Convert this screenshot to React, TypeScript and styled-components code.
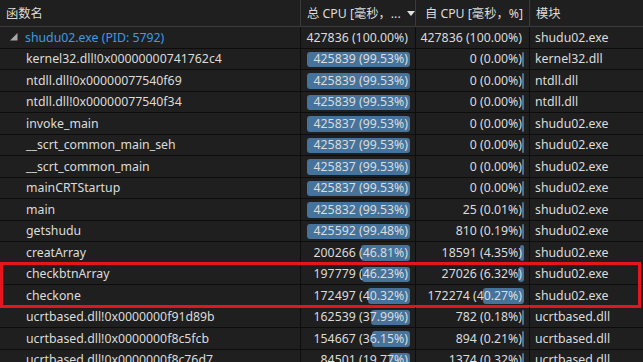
import styled, { createGlobalStyle } from 'styled-components';

const GlobalStyle = createGlobalStyle`
  html, body {
    margin: 0;
    padding: 0;
    background: #1f1f1f;
  }
  body {
    font-family: "Noto Sans", "Noto Sans CJK SC", sans-serif;
    font-size: 12.3px;
    color: #dcdcdc;
    overflow: hidden;
  }
`;

const Grid = styled.div`
  width: 643px;
  height: 362px;
  overflow: hidden;
  background: #1f1f1f;
`;

const HeaderRow = styled.div`
  display: grid;
  grid-template-columns: 301px 115px 114px 1fr;
  height: 27px;
  border-bottom: 1px solid #3b3b3b;
  box-sizing: border-box;
`;

const HeaderCell = styled.div<{ align?: 'left' | 'right' }>`
  display: flex;
  align-items: center;
  justify-content: ${p => (p.align === 'right' ? 'flex-end' : 'flex-start')};
  gap: 6px;
  padding: 0 6px 0 6px;
  border-right: 1px solid #3b3b3b;
  white-space: nowrap;
  overflow: hidden;

  &:last-child {
    border-right: none;
  }
`;

const SortArrow = styled.span`
  margin-left: auto;
  display: flex;
  align-items: center;
`;

const Row = styled.div`
  display: grid;
  grid-template-columns: 301px 115px 114px 1fr;
  height: 21.5px;
  border-bottom: 1px solid #0d0d0d;
  box-sizing: border-box;
`;

const NameCell = styled.div<{ root?: boolean }>`
  display: flex;
  align-items: center;
  gap: 7px;
  padding-left: ${p => (p.root ? '10px' : '26px')};
  border-right: 1px solid #0d0d0d;
  color: ${p => (p.root ? '#3d9be0' : '#dcdcdc')};
  white-space: nowrap;
  overflow: hidden;
`;

const NumCell = styled.div`
  position: relative;
  display: flex;
  align-items: center;
  justify-content: flex-end;
  padding-right: 7px;
  border-right: 1px solid #0d0d0d;
  white-space: nowrap;
`;

const BarTrack = styled.div`
  position: absolute;
  top: 3px;
  bottom: 2px;
  left: 5px;
  right: 5px;
  display: flex;
  justify-content: flex-end;
`;

const Bar = styled.div`
  height: 100%;
  background: #46739b;
  border-radius: 3px;
`;

const NumText = styled.span`
  position: relative;
`;

const ModuleCell = styled.div`
  display: flex;
  align-items: center;
  padding-left: 5px;
  white-space: nowrap;
  overflow: hidden;
`;

const Highlight = styled.div`
  position: relative;

  &::after {
    content: '';
    position: absolute;
    top: -2px;
    bottom: -1px;
    left: 0;
    right: 2px;
    border: 3px solid #e3151d;
    pointer-events: none;
  }
`;

interface Entry {
  name: string;
  total: number;
  totalPct: string;
  self: number;
  selfPct: string;
  module: string;
  root?: boolean;
}

const rows: Entry[] = [
  { name: 'shudu02.exe (PID: 5792)', total: 427836, totalPct: '100.00', self: 427836, selfPct: '100.00', module: 'shudu02.exe', root: true },
  { name: 'kernel32.dll!0x00000000741762c4', total: 425839, totalPct: '99.53', self: 0, selfPct: '0.00', module: 'kernel32.dll' },
  { name: 'ntdll.dll!0x00000077540f69', total: 425839, totalPct: '99.53', self: 0, selfPct: '0.00', module: 'ntdll.dll' },
  { name: 'ntdll.dll!0x00000077540f34', total: 425839, totalPct: '99.53', self: 0, selfPct: '0.00', module: 'ntdll.dll' },
  { name: 'invoke_main', total: 425837, totalPct: '99.53', self: 0, selfPct: '0.00', module: 'shudu02.exe' },
  { name: '__scrt_common_main_seh', total: 425837, totalPct: '99.53', self: 0, selfPct: '0.00', module: 'shudu02.exe' },
  { name: '__scrt_common_main', total: 425837, totalPct: '99.53', self: 0, selfPct: '0.00', module: 'shudu02.exe' },
  { name: 'mainCRTStartup', total: 425837, totalPct: '99.53', self: 0, selfPct: '0.00', module: 'shudu02.exe' },
  { name: 'main', total: 425832, totalPct: '99.53', self: 25, selfPct: '0.01', module: 'shudu02.exe' },
  { name: 'getshudu', total: 425592, totalPct: '99.48', self: 810, selfPct: '0.19', module: 'shudu02.exe' },
  { name: 'creatArray', total: 200266, totalPct: '46.81', self: 18591, selfPct: '4.35', module: 'shudu02.exe' },
  { name: 'checkbtnArray', total: 197779, totalPct: '46.23', self: 27026, selfPct: '6.32', module: 'shudu02.exe' },
  { name: 'checkone', total: 172497, totalPct: '40.32', self: 172274, selfPct: '40.27', module: 'shudu02.exe' },
  { name: 'ucrtbased.dll!0x0000000f91d89b', total: 162539, totalPct: '37.99', self: 782, selfPct: '0.18', module: 'ucrtbased.dll' },
  { name: 'ucrtbased.dll!0x0000000f8c5fcb', total: 154667, totalPct: '36.15', self: 894, selfPct: '0.21', module: 'ucrtbased.dll' },
  { name: 'ucrtbased.dll!0x0000000f8c76d7', total: 84501, totalPct: '19.77', self: 1374, selfPct: '0.32', module: 'ucrtbased.dll' },
];

const Expander = () => (
  <svg width="8" height="8" viewBox="0 0 8 8">
    <polygon points="0,7.5 7.5,7.5 7.5,0" fill="#a8a8a8" />
  </svg>
);

const NumberCell = ({ value, pct, showBar }: { value: number; pct: string; showBar: boolean }) => (
  <NumCell>
    {showBar && (
      <BarTrack>
        <Bar style={{ width: `max(2px, ${pct}%)` }} />
      </BarTrack>
    )}
    <NumText>
      {value} ({pct}%)
    </NumText>
  </NumCell>
);

const DataRow = ({ r }: { r: Entry }) => (
  <Row>
    <NameCell root={r.root}>
      {r.root && <Expander />}
      {r.name}
    </NameCell>
    <NumberCell value={r.total} pct={r.totalPct} showBar={!r.root} />
    <NumberCell value={r.self} pct={r.selfPct} showBar={!r.root} />
    <ModuleCell>{r.module}</ModuleCell>
  </Row>
);

const App = () => {
  return (
    <>
      <GlobalStyle />
      <Grid>
        <HeaderRow>
          <HeaderCell>函数名</HeaderCell>
          <HeaderCell>
            总 CPU [毫秒，...
            <SortArrow>
              <svg width="8" height="5" viewBox="0 0 8 5">
                <polygon points="0,0 8,0 4,5" fill="#e0e0e0" />
              </svg>
            </SortArrow>
          </HeaderCell>
          <HeaderCell align="right">自 CPU [毫秒，%]</HeaderCell>
          <HeaderCell>模块</HeaderCell>
        </HeaderRow>
        {rows.slice(0, 11).map(r => (
          <DataRow key={r.name} r={r} />
        ))}
        <Highlight>
          {rows.slice(11, 13).map(r => (
            <DataRow key={r.name} r={r} />
          ))}
        </Highlight>
        {rows.slice(13).map(r => (
          <DataRow key={r.name} r={r} />
        ))}
      </Grid>
    </>
  );
};

export default App;
